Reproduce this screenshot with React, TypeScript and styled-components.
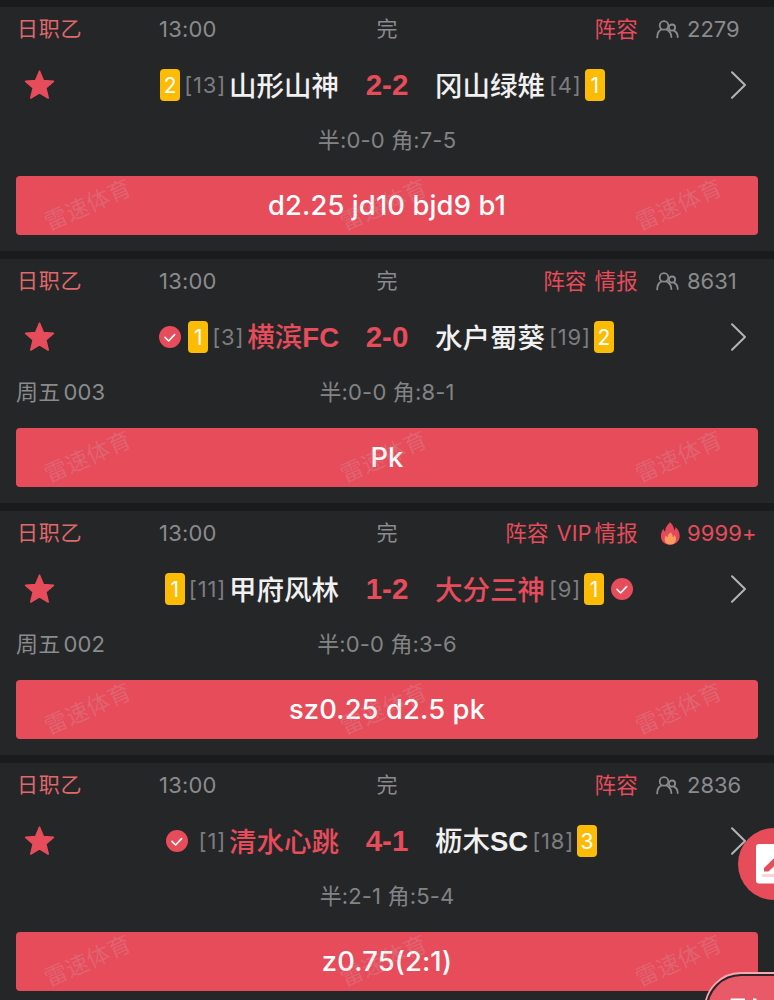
import React from "react";
import styled, { createGlobalStyle } from "styled-components";

const Global = createGlobalStyle`
  * { box-sizing: border-box; }
  html, body { margin: 0; padding: 0; background: #1a1b1d; overflow: hidden; }
`;

const red = "#e74c5b";

const Screen = styled.main`
  position: relative;
  width: 774px;
  height: 1000px;
  overflow: hidden;
  padding-top: 7px;
  display: flex;
  flex-direction: column;
  gap: 8px;
  background: #1a1b1d;
  color: #8a8b8d;
  font-family: Inter, "Noto Sans CJK SC", sans-serif;
  font-size: 22px;
  line-height: 1;
  white-space: nowrap;
`;

const Card = styled.article`
  flex: none;
  height: 244px;
  background: #252628;
`;

const Header = styled.header`
  display: grid;
  grid-template-columns: 159px 192px 72px 215px 1fr;
  align-items: center;
  height: 44px;
`;

const League = styled.span`
  padding: 0 0 1px 17px;
  font-size: 21px;
  letter-spacing: 0.7px;
  color: #e0696b;
`;

const Time = styled.span`
  letter-spacing: 0.2px;
`;

const Status = styled.span`
  padding-bottom: 1px;
  text-align: center;
  font-size: 21px;
`;

const Tags = styled.span`
  display: flex;
  justify-content: flex-end;
  gap: 8px;
  padding-top: 1px;
  font-size: 21.5px;
  letter-spacing: 0.2px;
  color: ${red};
`;

const Tag = styled.span`
  display: flex;
  gap: 3px;
`;

const Viewers = styled.span<{ $hot?: boolean }>`
  display: flex;
  align-items: center;
  gap: ${(p) => (p.$hot ? 6 : 8)}px;
  padding-left: ${(p) => (p.$hot ? 22 : 18)}px;
  letter-spacing: ${(p) => (p.$hot ? 0.1 : 0)}px;
  color: ${(p) => (p.$hot ? red : "#8a8b8d")};
`;

const Match = styled.div`
  display: grid;
  grid-template-columns: 80px 259px 96px 288px 1fr;
  align-items: center;
  height: 68px;
`;

const StarCell = styled.span`
  display: flex;
  padding-left: 24px;
`;

const Side = styled.div<{ $home?: boolean }>`
  display: flex;
  align-items: center;
  justify-content: ${(p) => (p.$home ? "flex-end" : "flex-start")};
`;

const Name = styled.span<{ $won?: boolean }>`
  display: flex;
  align-items: baseline;
  font-family: "Noto Sans CJK SC", sans-serif;
  font-size: 27.5px;
  font-weight: 500;
  color: ${(p) => (p.$won ? red : "#f1f1f1")};
`;

const Latin = styled.span`
  font-family: "Liberation Sans", sans-serif;
  font-weight: 700;
`;

const Rank = styled.span`
  margin: 0 3px 0 4px;
  padding-bottom: 1px;
  letter-spacing: 0.8px;
  color: #7c7d7f;
  font-weight: 400;
`;

const Yellow = styled.span`
  display: flex;
  align-items: center;
  justify-content: center;
  width: 20px;
  height: 32px;
  border-radius: 4px;
  background: #fcbc05;
  color: #fff;
  font-size: 21px;
`;

const CheckWrap = styled.span`
  display: flex;
  margin: 0 7px;
`;

const Score = styled.strong`
  font-family: "Liberation Sans", sans-serif;
  font-size: 29.5px;
  font-weight: 700;
  text-align: center;
  color: ${red};
`;

const ChevronCell = styled.span`
  display: flex;
  padding-left: 7px;
`;

const Info = styled.div`
  display: grid;
  grid-template-columns: 200px 374px 200px;
  align-items: center;
  height: 42px;
`;

const Round = styled.span`
  display: flex;
  gap: 3px;
  padding-left: 16px;
  letter-spacing: 0.2px;
`;

const Details = styled.span`
  text-align: center;
  letter-spacing: 0.15px;
  color: #828385;
  font-weight: 400;
`;

const Tip = styled.div`
  position: relative;
  display: flex;
  align-items: center;
  justify-content: center;
  height: 59.5px;
  margin: 14.5px 16px 0;
  border-radius: 4px;
  background: ${red};
  color: #fff;
  font-size: 27.3px;
  font-weight: 500;
  letter-spacing: 0.15px;
`;

const Marks = styled.div`
  position: absolute;
  inset: 0;
  display: flex;
  align-items: center;
  justify-content: space-between;
  padding: 0 33px 0 26px;
  font-size: 23px;
  font-weight: 400;
  letter-spacing: 0;
  color: rgba(205, 170, 175, 0.26);
`;

const Mark = styled.span`
  transform: rotate(-24deg);
`;

const Compose = styled.button`
  position: absolute;
  left: 738px;
  top: 828px;
  width: 72px;
  height: 72px;
  padding: 0;
  border: 0;
  border-radius: 50%;
  background: ${red};
`;

const Bubble = styled.div`
  position: absolute;
  left: 704px;
  top: 972px;
  width: 120px;
  height: 80px;
`;

const Star = () => (
  <svg width="31" height="30" viewBox="0 0 31 30">
    <path
      d="M15.5 1.2 19.4 10.6 29.4 11.4 21.8 18 24.2 28 15.5 22.7 6.8 28 9.2 18 1.6 11.4 11.6 10.6Z"
      fill={red}
      stroke={red}
      strokeWidth="1.6"
      strokeLinejoin="round"
    />
  </svg>
);

const Check = () => (
  <CheckWrap>
    <svg width="22" height="22" viewBox="0 0 22 22">
      <circle cx="11" cy="11" r="11" fill={red} />
      <path d="M6 11.4 9.6 15 15.6 8.6" fill="none" stroke="#fff" strokeWidth="1.6" strokeLinecap="round" strokeLinejoin="round" />
    </svg>
  </CheckWrap>
);

const Chevron = () => (
  <svg width="18" height="30" viewBox="0 0 18 30">
    <path d="M2 2.2 15 15 2 27.8" fill="none" stroke="#b4b4b4" strokeWidth="2" strokeLinecap="round" strokeLinejoin="round" />
  </svg>
);

const People = () => (
  <svg width="23" height="19" viewBox="0 0 23 19" fill="none" stroke="#8a8b8d" strokeWidth="1.8" strokeLinecap="round">
    <circle cx="8" cy="5.4" r="4.3" />
    <path d="M1.2 17.4C1.2 13.4 3 10.6 5.6 9.4M10.4 9.4C13 10.6 15.2 13.4 15.4 17" />
    <circle cx="16" cy="7.6" r="3.1" />
    <path d="M18 10.6C20.4 11.8 21.7 14.2 21.7 17" />
  </svg>
);

const Flame = () => (
  <svg width="21" height="23" viewBox="0 0 21 23">
    <path
      d="M10 .3C12.6 2.6 14.2 5 14.2 8.3 15.1 7.6 15.5 6.5 15.5 5 18.3 7.5 19.7 10.6 19.7 14 19.7 19.3 15.8 22.7 10.3 22.7S.9 19.3.9 14.2C.9 11.2 2.1 8.6 3.3 6.5 3.6 8 4.2 9 5.1 9.5 5.2 5.9 7.2 2.8 10 .3Z"
      fill="#e5485a"
    />
    <path
      d="M10.6 10.6C12.4 12 12.9 13.4 12.7 15.1 13.8 14.7 14.3 13.9 14.4 13 15.7 14.3 16.2 15.8 16 17.4 15.6 20.8 13.4 22.4 10.3 22.4S4.8 20.6 4.7 17.4C4.6 15.7 5.1 14.3 6 13.2 6.3 14.3 6.9 14.9 7.8 15.2 7.6 13.3 8.6 11.7 10.6 10.6Z"
      fill="#fa9c62"
    />
  </svg>
);

type Team = { name: string; suffix?: string; rank: number; yellow?: number; won?: boolean };
type Game = {
  home: Team;
  away: Team;
  score: string;
  tags: string[][];
  viewers: string;
  hot?: boolean;
  round?: [string, string];
  details: string;
  tip: string;
};

const games: Game[] = [
  {
    home: { name: "山形山神", rank: 13, yellow: 2 },
    away: { name: "冈山绿雉", rank: 4, yellow: 1 },
    score: "2-2",
    tags: [["阵容"]],
    viewers: "2279",
    details: "半:0-0 角:7-5",
    tip: "d2.25 jd10 bjd9 b1",
  },
  {
    home: { name: "横滨", suffix: "FC", rank: 3, yellow: 1, won: true },
    away: { name: "水户蜀葵", rank: 19, yellow: 2 },
    score: "2-0",
    tags: [["阵容"], ["情报"]],
    viewers: "8631",
    round: ["周五", "003"],
    details: "半:0-0 角:8-1",
    tip: "Pk",
  },
  {
    home: { name: "甲府风林", rank: 11, yellow: 1 },
    away: { name: "大分三神", rank: 9, yellow: 1, won: true },
    score: "1-2",
    tags: [["阵容"], ["VIP", "情报"]],
    viewers: "9999+",
    hot: true,
    round: ["周五", "002"],
    details: "半:0-0 角:3-6",
    tip: "sz0.25 d2.5 pk",
  },
  {
    home: { name: "清水心跳", rank: 1, won: true },
    away: { name: "枥木", suffix: "SC", rank: 18, yellow: 3 },
    score: "4-1",
    tags: [["阵容"]],
    viewers: "2836",
    details: "半:2-1 角:5-4",
    tip: "z0.75(2:1)",
  },
];

const TeamName = ({ team }: { team: Team }) => (
  <Name $won={team.won}>
    {team.name}
    {team.suffix && <Latin>{team.suffix}</Latin>}
  </Name>
);

export default function App() {
  return (
    <>
      <Global />
      <Screen>
        {games.map((g) => (
          <Card key={g.tip}>
            <Header>
              <League>日职乙</League>
              <Time>13:00</Time>
              <Status>完</Status>
              <Tags>
                {g.tags.map((parts) => (
                  <Tag key={parts.join("")}>
                    {parts.map((p) => (
                      <span key={p}>{p}</span>
                    ))}
                  </Tag>
                ))}
              </Tags>
              <Viewers $hot={g.hot}>
                {g.hot ? <Flame /> : <People />}
                {g.viewers}
              </Viewers>
            </Header>
            <Match>
              <StarCell>
                <Star />
              </StarCell>
              <Side $home>
                {g.home.won && <Check />}
                {g.home.yellow && <Yellow>{g.home.yellow}</Yellow>}
                <Rank>[{g.home.rank}]</Rank>
                <TeamName team={g.home} />
              </Side>
              <Score>{g.score}</Score>
              <Side>
                <TeamName team={g.away} />
                <Rank>[{g.away.rank}]</Rank>
                {g.away.yellow && <Yellow>{g.away.yellow}</Yellow>}
                {g.away.won && <Check />}
              </Side>
              <ChevronCell>
                <Chevron />
              </ChevronCell>
            </Match>
            <Info>
              <Round>
                {g.round?.map((p) => (
                  <span key={p}>{p}</span>
                ))}
              </Round>
              <Details>{g.details}</Details>
            </Info>
            <Tip>
              {g.tip}
              <Marks>
                <Mark>雷速体育</Mark>
                <Mark>雷速体育</Mark>
                <Mark>雷速体育</Mark>
              </Marks>
            </Tip>
          </Card>
        ))}
        <Compose aria-label="compose">
          <svg width="72" height="72" viewBox="0 0 72 72">
            <rect x="18" y="16" width="40" height="39.5" rx="3" fill="#fff" />
            <path d="M26 43.5V40L40 26.5 44 30.5 30.5 43.5Z" fill={red} />
            <rect x="24" y="46" width="26" height="3" rx="1.5" fill="#fbd3d8" />
          </svg>
        </Compose>
        <Bubble>
          <svg width="120" height="80" viewBox="0 0 120 80">
            <rect x="1" y="1" width="140" height="90" rx="36" fill="#2b2527" stroke="#f7a9b2" strokeWidth="1.8" />
            <rect x="4" y="4" width="140" height="90" rx="33" fill="#e85a68" />
            <path d="M27 26.5h14v4H25Z" fill="#fff" />
            <path d="M49 26.5h3l2 4h-5Z" fill="#fff" />
          </svg>
        </Bubble>
      </Screen>
    </>
  );
}
